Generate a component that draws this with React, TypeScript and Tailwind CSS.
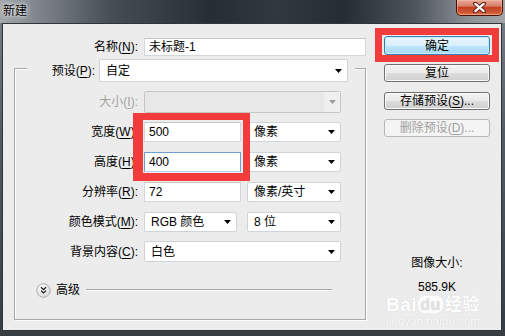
import React from "react";

const U = ({ c }: { c: string }) => (
  <span className="underline underline-offset-[2px] decoration-[1px]">{c}</span>
);

const Arrow = ({ color = "#000" }: { color?: string }) => (
  <svg width="7" height="4" viewBox="0 0 7 4" className="shrink-0">
    <path d="M0 0h7L3.5 4z" fill={color} />
  </svg>
);

function Sel({ w, h, text }: { w: string; h: string; text: string }) {
  return (
    <div
      className={`flex items-center justify-between bg-white border border-[#d0d3d7] rounded-[2px] pl-[6px] pr-[5px] ${w} ${h}`}
    >
      <span className="text-black">{text}</span>
      <Arrow />
    </div>
  );
}

function Inp({ w, h, text, focus }: { w: string; h: string; text: string; focus?: boolean }) {
  return (
    <div
      className={`flex items-center bg-white border pl-[4px] ${w} ${h} ${
        focus ? "border-[#6d9fd0] border-b-[#b9d3ec]" : "border-[#d3d6da] border-t-[#c3c6ca]"
      }`}
    >
      <span className="text-black">{text}</span>
    </div>
  );
}

function Lbl({ text, acc, w, dim }: { text: string; acc: string; w: string; dim?: boolean }) {
  return (
    <div className={`text-right shrink-0 ${w} ${dim ? "text-[#a3a3a3]" : "text-black"}`}>
      {text}(<U c={acc} />):
    </div>
  );
}

function Btn({ children, h, variant }: { children: React.ReactNode; h: string; variant?: "ok" | "off" }) {
  const base = "w-[106px] rounded-[3px] border flex items-center justify-center";
  const style =
    variant === "ok"
      ? "border-[#3c7fb1] bg-[linear-gradient(to_bottom,#eaf6fd_0%,#d9f0fc_50%,#bee6fd_51%,#a7d9f5_100%)] shadow-[inset_0_0_0_1px_#c4eafe] text-black"
      : variant === "off"
      ? "border-[#b5b8ba] bg-[#f4f4f4] text-[#a0a0a0]"
      : "border-[#707070] bg-[linear-gradient(to_bottom,#f2f2f2_0%,#ebebeb_50%,#dddddd_51%,#cfcfcf_100%)] shadow-[inset_0_0_0_1px_#fbfbfb] text-black";
  return <div className={`${base} ${h} ${style}`}>{children}</div>;
}

export default function App() {
  return (
    <div className="relative w-[505px] h-[336px] overflow-hidden flex flex-col bg-[linear-gradient(180deg,#7c8288_0%,#555b61_40%,#363c42_100%)] font-['Liberation_Sans','Noto_Sans_CJK_SC',sans-serif] text-[12px] leading-[14px]">
      {/* title bar */}
      <div className="h-[23px] shrink-0 flex items-start justify-between bg-[linear-gradient(90deg,#a3a7ab_0%,#7d8389_8%,#464d54_22%,#262d35_42%,#303840_55%,#252c34_68%,#4d545b_82%,#8c9196_93%,#a2a6aa_100%)]">
        <div className="ml-[3px] mt-[4px] text-black [text-shadow:0_0_6px_rgba(255,255,255,0.9),0_0_3px_rgba(255,255,255,0.9)]">
          新建
        </div>
        <div className="mr-[2px] w-[47px] h-[16px] rounded-b-[5px] border border-t-0 border-[#4a1208] bg-[linear-gradient(to_bottom,#e9a897_0%,#d8806b_40%,#c4401f_50%,#cf5a36_85%,#e07a52_100%)] shadow-[inset_0_0_0_1px_rgba(255,200,180,0.45)] flex items-center justify-center">
          <svg width="13" height="11" viewBox="0 0 13 11">
            <path d="M2 1.5L11 9.5M11 1.5L2 9.5" stroke="#5a1a10" strokeWidth="4" strokeLinecap="round" />
            <path d="M2.3 1.8L10.7 9.2M10.7 1.8L2.3 9.2" stroke="#fff" strokeWidth="2.2" strokeLinecap="round" />
          </svg>
        </div>
      </div>

      {/* client */}
      <div className="ml-[2px] w-[500px] h-[308px] border border-[#2f353b] bg-[#ececec] flex">
        {/* left column */}
        <div className="w-[367px] shrink-0 flex flex-col">
          <div className="mt-[14px] h-[18px] flex items-center">
            <Lbl text="名称" acc="N" w="w-[135px]" />
            <div className="ml-[6px]">
              <Inp w="w-[222px]" h="h-[18px]" text="未标题-1" />
            </div>
          </div>

          <div className="ml-[11px] mt-[12px] w-[352px] h-[252px] border border-[#a7a7a7] shadow-[inset_1px_1px_0_#ffffff,1px_1px_0_#ffffff] flex flex-col">
            {/* preset row breaks the frame */}
            <div className="-mt-[10px] ml-[12px] w-[328px] h-[23px] bg-[#ececec] flex items-center">
              <Lbl text="预设" acc="P" w="w-[68px]" />
              <div className="ml-[4px]">
                <Sel w="w-[249px]" h="h-[23px]" text="自定" />
              </div>
            </div>

            <div className="mt-[9px] h-[22px] flex items-center">
              <Lbl text="大小" acc="I" w="w-[123px]" dim />
              <div className="ml-[6px] w-[197px] h-[22px] border border-[#c6c6c6] rounded-[2px] bg-[#e8e8e8] flex">
                <div className="flex-1" />
                <div className="w-[16px] bg-[#f0f0f0] flex items-center justify-center">
                  <Arrow color="#9a9a9a" />
                </div>
              </div>
            </div>

            <div className="mt-[9px] h-[20px] flex items-center">
              <Lbl text="宽度" acc="W" w="w-[123px]" />
              <div className="ml-[6px] flex gap-[6px]">
                <Inp w="w-[97px]" h="h-[20px]" text="500" />
                <Sel w="w-[94px]" h="h-[20px]" text="像素" />
              </div>
            </div>

            <div className="mt-[10px] h-[20px] flex items-center">
              <Lbl text="高度" acc="H" w="w-[123px]" />
              <div className="ml-[6px] flex gap-[6px]">
                <Inp w="w-[97px]" h="h-[20px]" text="400" focus />
                <Sel w="w-[94px]" h="h-[20px]" text="像素" />
              </div>
            </div>

            <div className="mt-[10px] h-[20px] flex items-center">
              <Lbl text="分辨率" acc="R" w="w-[123px]" />
              <div className="ml-[6px] flex gap-[6px]">
                <Inp w="w-[97px]" h="h-[20px]" text="72" />
                <Sel w="w-[94px]" h="h-[20px]" text="像素/英寸" />
              </div>
            </div>

            <div className="mt-[10px] h-[20px] flex items-center">
              <Lbl text="颜色模式" acc="M" w="w-[123px]" />
              <div className="ml-[6px] flex gap-[10px]">
                <Sel w="w-[93px]" h="h-[20px]" text="RGB 颜色" />
                <Sel w="w-[94px]" h="h-[20px]" text="8 位" />
              </div>
            </div>

            <div className="mt-[9px] h-[21px] flex items-center">
              <Lbl text="背景内容" acc="C" w="w-[123px]" />
              <div className="ml-[6px]">
                <Sel w="w-[197px]" h="h-[21px]" text="白色" />
              </div>
            </div>

            <div className="mt-[20px] h-[16px] flex items-center">
              <svg width="15" height="15" viewBox="0 0 15 15" className="ml-[21px] shrink-0">
                <defs>
                  <radialGradient id="adv" cx="0.4" cy="0.35" r="0.7">
                    <stop offset="0" stopColor="#ffffff" />
                    <stop offset="1" stopColor="#d6d6d6" />
                  </radialGradient>
                </defs>
                <circle cx="7.5" cy="7.5" r="6.8" fill="url(#adv)" stroke="#a9a9a9" strokeWidth="0.9" />
                <path d="M5 4.3l2.5 2.4 2.5-2.4M5 7.6l2.5 2.4 2.5-2.4" fill="none" stroke="#111" strokeWidth="1.2" />
              </svg>
              <span className="ml-[5px] text-black">高级</span>
              <div className="ml-[6px] w-[246px] h-[2px] border-t border-[#a7a7a7] border-b border-b-white" />
            </div>
          </div>
        </div>

        {/* right column */}
        <div className="flex-1 flex flex-col pl-[14px]">
          <div className="mt-[12px]">
            <Btn h="h-[19px]" variant="ok">确定</Btn>
          </div>
          <div className="mt-[9px]">
            <Btn h="h-[18px]">复位</Btn>
          </div>
          <div className="mt-[10px]">
            <Btn h="h-[18px]">
              存储预设(<U c="S" />)...
            </Btn>
          </div>
          <div className="mt-[9px]">
            <Btn h="h-[18px]" variant="off">
              删除预设(<U c="D" />)...
            </Btn>
          </div>
          <div className="mt-[119px] w-[106px] text-center text-black">图像大小:</div>
          <div className="mt-[10px] w-[106px] text-center text-black">585.9K</div>
        </div>
      </div>

      {/* annotation: red boxes */}
      <div className="absolute left-[375px] top-[28px] w-[124px] h-[34px] border-[7px] border-[#f23b3b]" />
      <div className="absolute left-[133px] top-[113px] w-[117px] h-[68px] border-[#f23b3b] border-l-[10px] border-t-[7px] border-r-[7px] border-b-[8px]" />

      {/* watermark */}
      <div className="absolute left-[386px] top-[295px] flex flex-col items-center text-white [text-shadow:0_0_1px_rgba(0,0,0,0.18)]">
        <div className="flex items-center h-[19px] font-bold text-[19px] leading-[19px] tracking-[0.5px]">
          <span>Bai</span>
          <span className="ml-[1px] px-[2px] rounded-[7px] bg-white/85 text-[#e2e2e2] text-[16px] leading-[17px]">du</span>
          <span className="ml-[2px] text-[17px]">经验</span>
        </div>
        <div className="mt-[2px] text-[11px] leading-[11px] tracking-[0.3px]">jingyan.baidu.com</div>
      </div>
    </div>
  );
}
